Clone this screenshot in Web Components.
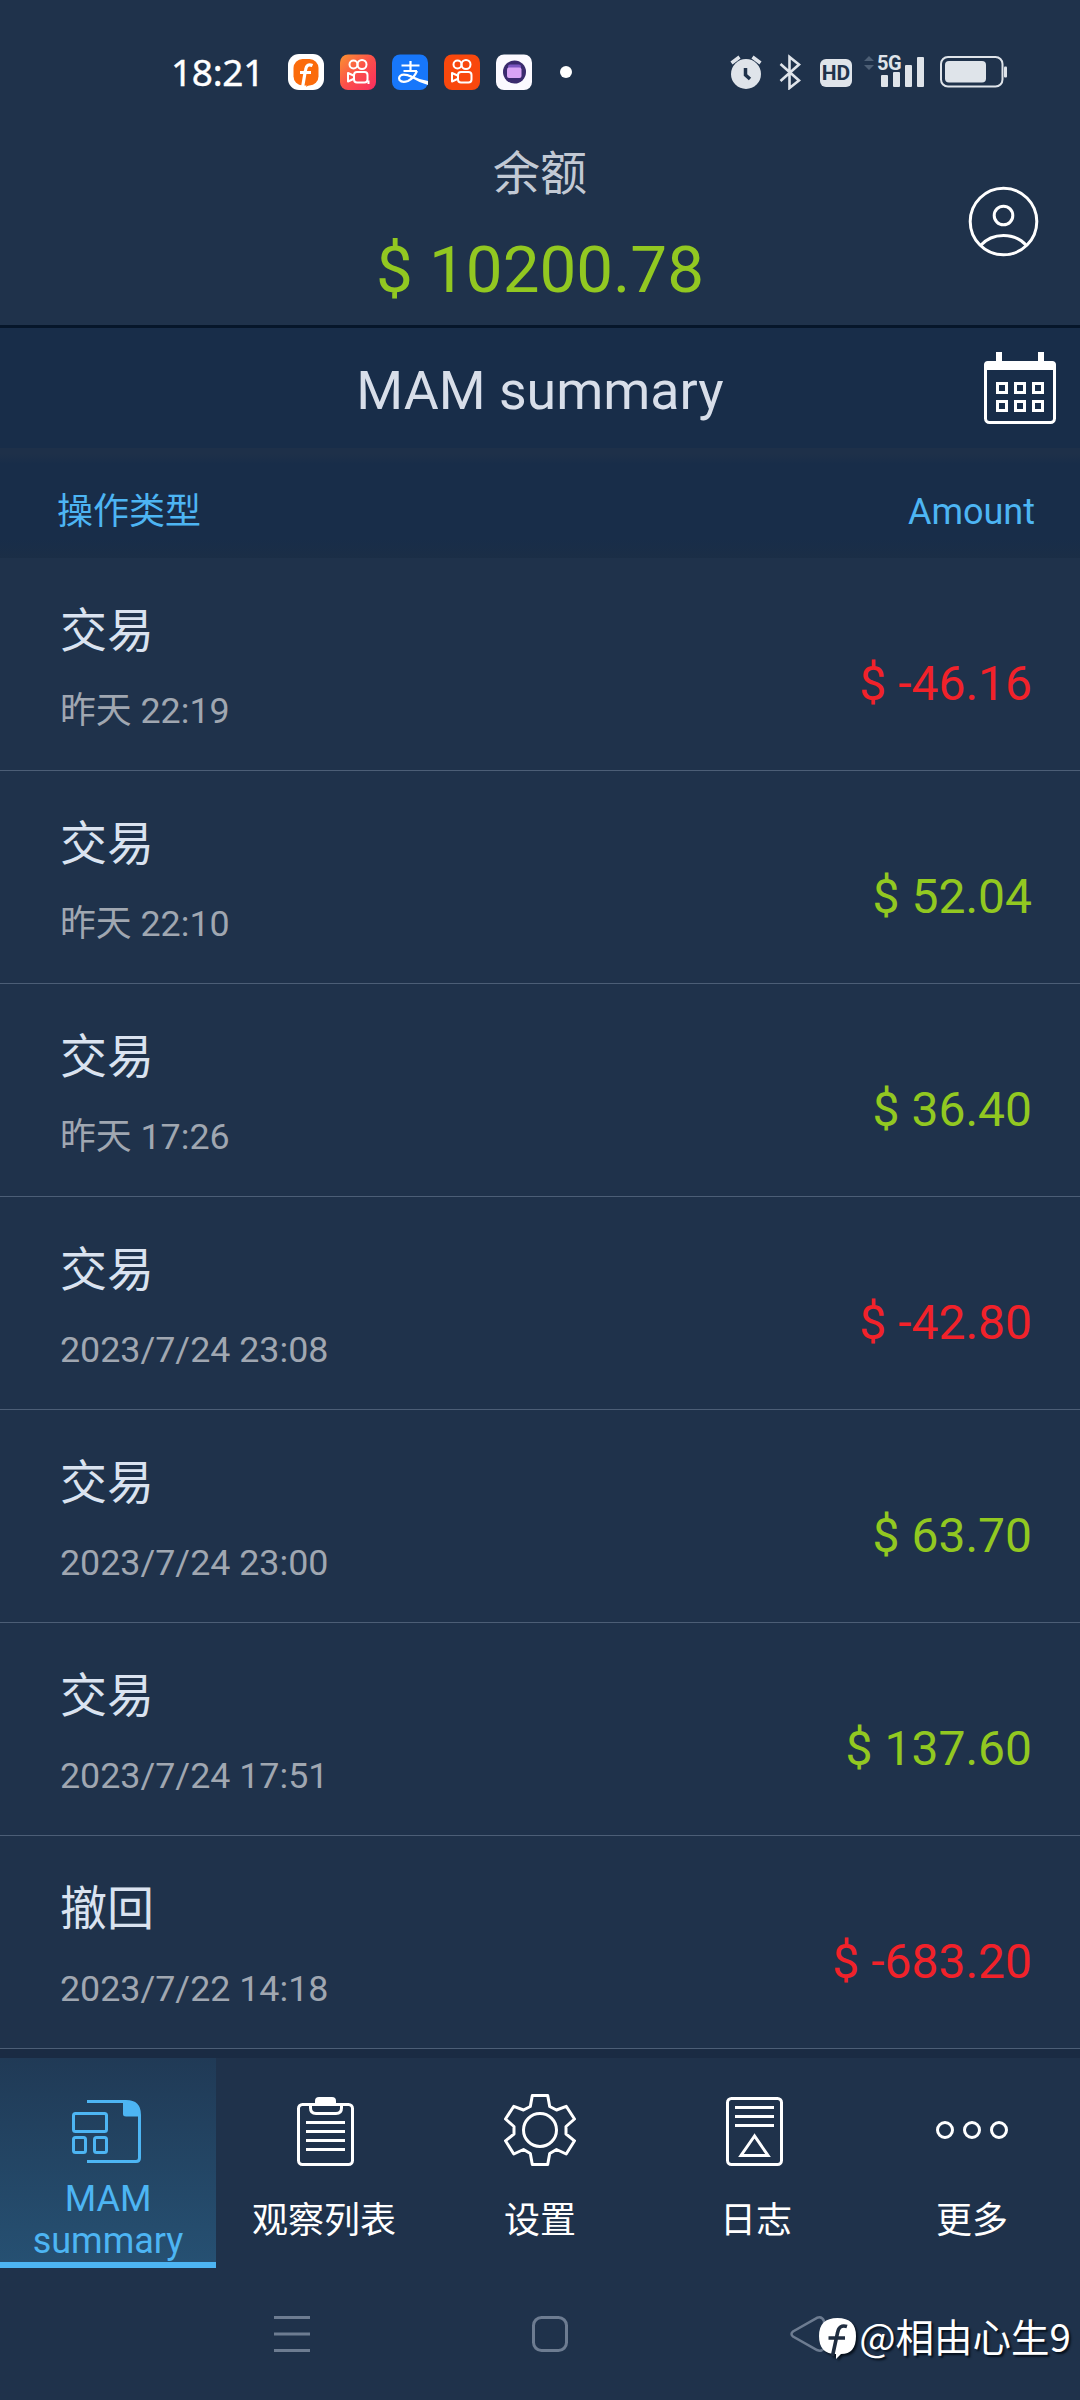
<!DOCTYPE html>
<html lang="zh-CN">
<head>
<meta charset="utf-8">
<title>MAM summary</title>
<style>
  html, body {
    margin: 0;
    background: #1f324b;
  }
  body {
    width: 1080px;
    height: 2400px;
    overflow: hidden;
    font-family: Roboto, "Noto Sans CJK SC", sans-serif;
    --green: #92c821;
    --red: #f1222a;
    --accent: #4db5f3;
    --bar: #182d49;
  }
</style>
</head>
<body>
<mam-app></mam-app>

<script>
const ICONS = {
  summary: `
    <path d="M15 7.5H54Q67.500 7.500 67.500 21V64Q67.500 67.500 64 67.500H15"/>
    <path d="M51 7.500H54Q67.500 7.500 67.500 22.500H54Q51 22.500 51 20Z" fill="currentColor" stroke="none"/>
    <rect x="1.500" y="19.500" width="33" height="18" rx="2"/>
    <rect x="1.500" y="43.500" width="12" height="15" rx="2"/>
    <rect x="22.500" y="43.500" width="12" height="15" rx="2"/>`,
  watchlist: `
    <rect x="10.500" y="10.500" width="54" height="60" rx="4"/>
    <path d="M22.500 10.500V14Q22.500 19.500 28 19.500H48Q53.500 19.500 53.500 14V10.500"/>
    <path d="M27 12V7Q27 3 31 3H44Q48 3 48 7V12Z" fill="currentColor" stroke="none"/>
    <path d="M18 28.500H57M18 37.500H57M18 46.500H57M18 55.500H57"/>`,
  settings: `
    <path stroke-linejoin="round" d="M28.300 1.500L26.300 12.500L19.500 16L9.800 12.300L1.500 25L10 32.500V40L1.500 46.800L9.800 60L19.500 55.500L26.300 59.500L28.300 70.500H43.700L45.700 59.500L52.500 55.500L62.200 60L70.500 46.800L62 40V32.500L70.500 25L62.200 12.300L52.500 16L45.700 12.500L43.700 1.500Z"/>
    <circle cx="36" cy="36" r="16.500"/>`,
  log: `
    <rect x="7.500" y="4.500" width="54" height="66" rx="4"/>
    <path d="M15 13.500H54M15 22.500H54M15 31.500H54"/>
    <path d="M34.500 42L21 61.500H48Z"/>`,
  more: `
    <circle cx="9" cy="36" r="7.500"/>
    <circle cx="36" cy="36" r="7.500"/>
    <circle cx="63" cy="36" r="7.500"/>`,
  user: `
    <circle cx="35.500" cy="36.500" r="33.300"/>
    <circle cx="35.500" cy="30.500" r="9.300"/>
    <path d="M12.500 60.500Q21.500 50.500 35.500 50.500T58.500 60.500"/>`,
  calendar: `
    <rect x="1.500" y="10.500" width="69" height="60" rx="4"/>
    <path d="M0 18V13Q0 9 4 9H12V0H18V9H54V0H60V9H68Q72 9 72 13V18Z" fill="currentColor" stroke="none"/>
    <path d="M13.500 31.500h9v9h-9zM31.500 31.500h9v9h-9zM49.500 31.500h9v9h-9zM13.500 49.500h9v9h-9zM31.500 49.500h9v9h-9zM49.500 49.500h9v9h-9z"/>`
};

const camera = `
  <g fill="none" stroke="#fff" stroke-width="2">
    <circle cx="13.500" cy="10.500" r="4"/>
    <circle cx="22" cy="10.500" r="4.500"/>
    <rect x="14" y="18" width="13.500" height="10.500" rx="3"/>
    <path d="M13.500 21.500L8 19V27.500L13.500 25" stroke-linejoin="round"/>
  </g>`;

const APPS = {
  forum: `
    <rect width="36" height="36" rx="11" fill="#fff"/>
    <rect x="5.500" y="5" width="25" height="26.500" rx="9" fill="#fb6b0b"/>
    <path d="M24.500 11.500Q18.500 9 17.500 16L14.500 33.500M12 18.500H23" fill="none" stroke="#fff" stroke-width="3.200"/>
    <path d="M18 33L22.500 30H19Z" fill="#fb6b0b"/>`,
  videoLite: `
    <defs><linearGradient id="g" x1="0" y1="0" x2="1" y2="1"><stop offset="0" stop-color="#fb9330"/><stop offset=".5" stop-color="#fb4f4a"/><stop offset="1" stop-color="#f92c60"/></linearGradient></defs>
    <rect y=".5" width="36" height="35.500" rx="8" fill="url(#g)"/>${camera}
    <path d="M28.500 26.500V30" stroke="#fff" stroke-width="2"/>`,
  pay: `
    <rect y=".5" width="36" height="35.500" rx="8" fill="#1777fb"/>
    <g fill="none" stroke="#fff" stroke-width="2.200">
      <path d="M9.500 11.500H27.500M18.500 7V16.500M11.500 17H25"/>
      <path d="M25 17Q22 24 16 27Q10 29 7.500 26Q6 22.500 10 20.800Q14 20 20 23"/>
    </g>
    <path d="M18 21Q26 25 36 27V31Q26 28 18 23Z" fill="#fff"/>`,
  video: `<rect y=".5" width="36" height="35.500" rx="8" fill="#f9480d"/>${camera}`,
  wallet: `
    <rect y=".5" width="36" height="35.500" rx="8" fill="#fbf9ff"/>
    <circle cx="18.500" cy="18" r="11.500" fill="#3a2a6e"/>
    <rect x="12" y="10.500" width="13" height="6" rx="2" fill="#7b56c0"/>
    <rect x="11" y="13.500" width="14.500" height="10.500" rx="2" fill="#d9a3f5"/>`
};

class LineIcon extends HTMLElement {
  constructor() {
    super();
    this.attachShadow({ mode: 'open' });
  }

  connectedCallback() {
    this.shadowRoot.innerHTML = `
      <style>
        :host { display: block; width: 72px; height: 72px; }
        svg { display: block; }
      </style>
      <svg width="72" height="72" fill="none" stroke="currentColor" stroke-width="3">${ICONS[this.getAttribute('name')]}</svg>
    `;
  }
}
customElements.define('line-icon', LineIcon);

class AppBadge extends HTMLElement {
  constructor() {
    super();
    this.attachShadow({ mode: 'open' });
  }

  connectedCallback() {
    this.shadowRoot.innerHTML = `
      <style>
        :host { display: block; width: 36px; height: 36px; }
        svg { display: block; }
      </style>
      <svg width="36" height="36">${APPS[this.getAttribute('app')]}</svg>
    `;
  }
}
customElements.define('app-badge', AppBadge);

class StatusBar extends HTMLElement {
  constructor() {
    super();
    this.attachShadow({ mode: 'open' });
  }

  connectedCallback() {
    this.shadowRoot.innerHTML = `
      <style>
        :host {
          display: flex;
          justify-content: space-between;
          align-items: flex-start;
          box-sizing: border-box;
          height: 120px;
          padding: 48px 73px 0 171px;
        }
        .left, .right { display: flex; align-items: center; height: 48px; }
        .time {
          width: 117px;
          font: 400 37px/50px "Noto Sans", sans-serif;
          letter-spacing: -0.3px;
          color: #fff;
          -webkit-text-stroke: 0.4px #fff;
        }
        .apps { display: flex; gap: 16px; }
        .dot { width: 12px; height: 12px; margin-left: 28px; border-radius: 50%; background: #fff; }
        .right { color: #dfe4ea; }
        svg { display: block; }
        .hd {
          width: 32px;
          margin: 2px 12px 0 19px;
          border-radius: 6px;
          background: #dfe4ea;
          color: #1f324b;
          font: 700 21px/28px Roboto, sans-serif;
          text-align: center;
        }
        .signal { position: relative; width: 61px; height: 34px; }
        .signal span {
          position: absolute;
          left: 13px;
          top: -1px;
          font: 700 20px/18px Roboto, sans-serif;
          letter-spacing: -0.5px;
        }
        .battery { margin-left: 15px; }
      </style>
      <div class="left">
        <div class="time">18:21</div>
        <div class="apps">
          <app-badge app="forum"></app-badge>
          <app-badge app="videoLite"></app-badge>
          <app-badge app="pay"></app-badge>
          <app-badge app="video"></app-badge>
          <app-badge app="wallet"></app-badge>
        </div>
        <div class="dot"></div>
      </div>
      <div class="right">
        <svg width="71" height="36" fill="none" stroke="currentColor">
          <circle cx="16" cy="20" r="15" fill="currentColor" stroke="none"/>
          <path d="M1.500 9L9.500 3M30.500 9L22.500 3" stroke-width="3.500"/>
          <path d="M15.500 14V21L20 25" stroke="#1f324b" stroke-width="3.500"/>
          <path d="M50.500 10L69 26.500L59.500 34V3L69 10.500L50.500 27" stroke-width="2.600"/>
        </svg>
        <div class="hd">HD</div>
        <div class="signal">
          <svg width="61" height="34" fill="currentColor">
            <path d="M0 6L5 1L10 6ZM0 10L5 15L10 10Z" fill="#4d5f75"/>
            <rect x="17" y="20" width="7" height="12" rx="1"/>
            <rect x="29" y="17" width="7" height="15" rx="1"/>
            <rect x="41" y="10" width="7" height="22" rx="1"/>
            <rect x="53" y="2" width="7" height="30" rx="1"/>
          </svg>
          <span>5G</span>
        </div>
        <svg class="battery" width="67" height="32">
          <rect x="1" y="1" width="61.500" height="29.500" rx="7" fill="none" stroke="currentColor" stroke-width="2"/>
          <rect x="5" y="5" width="41" height="21.500" rx="4" fill="currentColor"/>
          <rect x="64" y="10.500" width="3" height="11" rx="1" fill="currentColor"/>
        </svg>
      </div>
    `;
  }
}
customElements.define('status-bar', StatusBar);

class BalanceHeader extends HTMLElement {
  constructor() {
    super();
    this.attachShadow({ mode: 'open' });
  }

  connectedCallback() {
    this.shadowRoot.innerHTML = `
      <style>
        :host {
          display: grid;
          grid-template-columns: 112px 1fr 112px;
          box-sizing: border-box;
          height: 208px;
          border-bottom: 3px solid #06162a;
          text-align: center;
        }
        .balance { grid-column: 2; padding-top: 26px; }
        .label { font-size: 47px; line-height: 56px; color: #c2c9d4; }
        .value { margin-top: 28px; font-size: 65.5px; line-height: 80px; color: var(--green); }
        line-icon { margin-top: 65px; color: #fff; }
      </style>
      <div class="balance">
        <div class="label"><slot name="label"></slot></div>
        <div class="value"><slot></slot></div>
      </div>
      <line-icon name="user"></line-icon>
    `;
  }
}
customElements.define('balance-header', BalanceHeader);

class TitleBar extends HTMLElement {
  constructor() {
    super();
    this.attachShadow({ mode: 'open' });
  }

  connectedCallback() {
    this.shadowRoot.innerHTML = `
      <style>
        :host {
          display: grid;
          grid-template-columns: 96px 1fr 96px;
          height: 120px;
          background: var(--bar);
        }
        h1 {
          grid-column: 2;
          margin: 0;
          font-size: 53.7px;
          font-weight: 400;
          line-height: 126px;
          text-align: center;
          color: #d8dee9;
        }
        line-icon { margin-top: 24px; color: #fff; }
      </style>
      <h1><slot></slot></h1>
      <line-icon name="calendar"></line-icon>
    `;
  }
}
customElements.define('title-bar', TitleBar);

class ListHeader extends HTMLElement {
  constructor() {
    super();
    this.attachShadow({ mode: 'open' });
  }

  connectedCallback() {
    this.shadowRoot.innerHTML = `
      <style>
        :host {
          display: flex;
          justify-content: space-between;
          box-sizing: border-box;
          height: 110px;
          padding: 39px 45px 0 57px;
          background: linear-gradient(#1e3049 0, #1e3049 6px, var(--bar) 16px, var(--bar) 90px, #1b2e46 112px);
          font-size: 36px;
          line-height: 50px;
          color: var(--accent);
        }
      </style>
      <span><slot name="type"></slot></span>
      <span><slot name="amount"></slot></span>
    `;
  }
}
customElements.define('list-header', ListHeader);

class TransactionRow extends HTMLElement {
  constructor() {
    super();
    this.attachShadow({ mode: 'open' });
  }

  connectedCallback() {
    const amount = this.getAttribute('amount');
    const sign = amount.startsWith('-') ? 'red' : 'green';

    this.shadowRoot.innerHTML = `
      <style>
        :host {
          display: flex;
          justify-content: space-between;
          box-sizing: border-box;
          height: 213px;
          padding: 45px 48px 0 60px;
          border-bottom: 1px solid #4c5e76;
        }
        .type { font-size: 47px; line-height: 56px; color: #dae3f0; }
        .date { margin-top: 30px; font-size: 35.8px; line-height: 44px; color: #a0a7b1; }
        .amount { margin-top: 53px; font-size: 48px; line-height: 56px; color: var(--${sign}); }
      </style>
      <div>
        <div class="type">${this.getAttribute('type')}</div>
        <div class="date">${this.getAttribute('date')}</div>
      </div>
      <div class="amount">$ ${amount}</div>
    `;
  }
}
customElements.define('transaction-row', TransactionRow);

class TabItem extends HTMLElement {
  constructor() {
    super();
    this.attachShadow({ mode: 'open' });
  }

  connectedCallback() {
    this.shadowRoot.innerHTML = `
      <style>
        :host {
          display: flex;
          flex-direction: column;
          align-items: center;
          box-sizing: border-box;
          height: 210px;
          padding-top: 36px;
          color: #fff;
        }
        :host([active]) {
          border-bottom: 6px solid var(--accent);
          background: linear-gradient(#203a56, #265072);
          color: var(--accent);
        }
        .label { margin-top: 34px; font-size: 36px; line-height: 42px; text-align: center; }
        :host([active]) .label { width: 160px; margin-top: 12px; }
      </style>
      <line-icon name="${this.getAttribute('icon')}"></line-icon>
      <div class="label"><slot></slot></div>
    `;
  }
}
customElements.define('tab-item', TabItem);

class TabBar extends HTMLElement {
  constructor() {
    super();
    this.attachShadow({ mode: 'open' });
  }

  connectedCallback() {
    this.shadowRoot.innerHTML = `
      <style>
        :host {
          display: grid;
          grid-template-columns: repeat(5, 1fr);
          border-top: 9px solid #1a2b43;
        }
      </style>
      <slot></slot>
    `;
  }
}
customElements.define('tab-bar', TabBar);

class SystemNav extends HTMLElement {
  constructor() {
    super();
    this.attachShadow({ mode: 'open' });
  }

  connectedCallback() {
    this.shadowRoot.innerHTML = `
      <style>
        :host {
          display: flex;
          gap: 222px;
          align-items: center;
          height: 132px;
          padding-left: 274px;
        }
        svg { fill: none; stroke: #6d7c91; stroke-width: 3; }
      </style>
      <svg width="36" height="36"><path d="M0 1.500H36M0 18H36M0 34.500H36"/></svg>
      <svg width="36" height="36"><rect x="1.500" y="1.500" width="33" height="33" rx="8"/></svg>
      <svg width="36" height="36"><path stroke-width="2.500" d="M27 1.800L3 15.500Q0 18 3 20.500L27 34Q32 36 34 32V5Q32 0 27 1.800Z"/></svg>
    `;
  }
}
customElements.define('system-nav', SystemNav);

class UserMark extends HTMLElement {
  constructor() {
    super();
    this.attachShadow({ mode: 'open' });
  }

  connectedCallback() {
    this.shadowRoot.innerHTML = `
      <style>
        :host {
          position: absolute;
          right: 9px;
          bottom: 38px;
          display: flex;
          align-items: center;
          gap: 3px;
          font: 400 38.5px/54px "Noto Sans CJK SC", sans-serif;
          color: #fff;
          text-shadow: 2px 2px 2px #06101c;
        }
        svg { display: block; margin-top: 7px; filter: drop-shadow(2px 2px 1px #06101c); }
      </style>
      <svg width="37" height="43">
        <path d="M18.500 1Q37 1 37 19T22 37L17 42V37Q0 37 0 19T18.500 1Z" fill="#fff"/>
        <path d="M28 9.500Q20 7 18.500 16L13.500 39M9.500 21H26" fill="none" stroke="#1f2d40" stroke-width="3.600"/>
      </svg>
      <span><slot></slot></span>
    `;
  }
}
customElements.define('user-mark', UserMark);

class MamApp extends HTMLElement {
  constructor() {
    super();
    this.attachShadow({ mode: 'open' });
  }

  connectedCallback() {
    const rows = [
      ['交易', '昨天 22:19', '-46.16'],
      ['交易', '昨天 22:10', '52.04'],
      ['交易', '昨天 17:26', '36.40'],
      ['交易', '2023/7/24 23:08', '-42.80'],
      ['交易', '2023/7/24 23:00', '63.70'],
      ['交易', '2023/7/24 17:51', '137.60'],
      ['撤回', '2023/7/22 14:18', '-683.20']
    ];

    this.shadowRoot.innerHTML = `
      <style>
        :host { display: block; position: relative; width: 1080px; height: 2400px; }
      </style>
      <status-bar></status-bar>
      <balance-header><span slot="label">余额</span>$ 10200.78</balance-header>
      <title-bar>MAM summary</title-bar>
      <list-header><span slot="type">操作类型</span><span slot="amount">Amount</span></list-header>
      ${rows.map(([type, date, amount]) => `<transaction-row type="${type}" date="${date}" amount="${amount}"></transaction-row>`).join('')}
      <tab-bar>
        <tab-item icon="summary" active>MAM summary</tab-item>
        <tab-item icon="watchlist">观察列表</tab-item>
        <tab-item icon="settings">设置</tab-item>
        <tab-item icon="log">日志</tab-item>
        <tab-item icon="more">更多</tab-item>
      </tab-bar>
      <system-nav></system-nav>
      <user-mark>@相由心生9</user-mark>
    `;
  }
}
customElements.define('mam-app', MamApp);
</script>
</body>
</html>
